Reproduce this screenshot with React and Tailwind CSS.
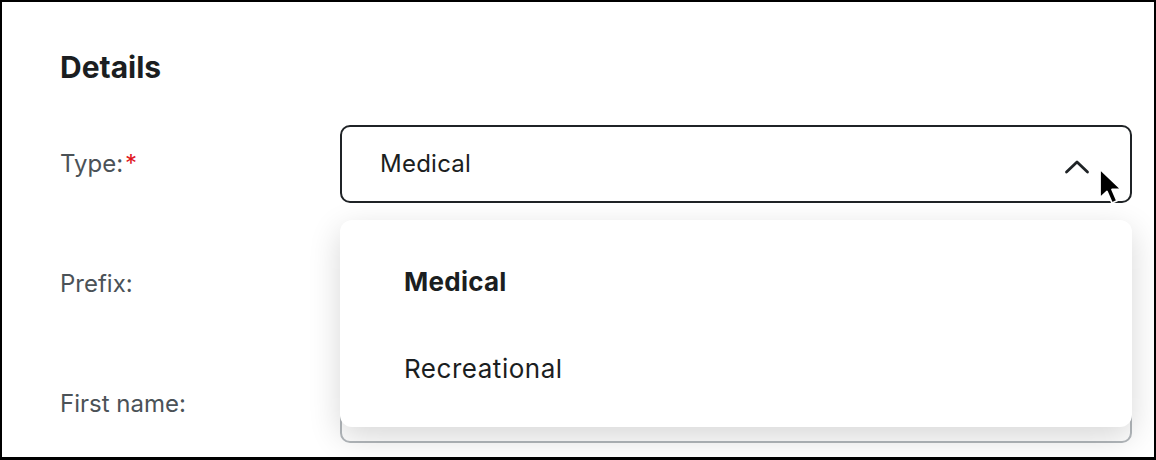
import React from 'react';

const font = { fontFamily: 'Inter, "Noto Sans", sans-serif' };

const ChevronUp = () => (
    <svg width="26" height="16" viewBox="0 0 26 16" fill="none" className="shrink-0 mt-[6px]">
        <path d="M2.5 13 L13 3 L23.5 13" stroke="#1f2326" strokeWidth="2.8" strokeLinecap="round" strokeLinejoin="round" />
    </svg>
);

const Cursor = () => (
    <svg width="30" height="40" viewBox="0 0 30 40" className="absolute left-[758px] top-[42px] pointer-events-none">
        <path d="M2 2 L2 31 L9 24.5 L14 36 L19 33.8 L14 22.5 L23.5 22.5 Z" fill="#000" stroke="#fff" strokeWidth="1.8" strokeLinejoin="round" />
    </svg>
);

const Row = ({ label, required, children }) => (
    <div className="flex items-center">
        <div className="w-[280px] text-[24px] text-[#4b5257]">
            {label}
            {required && <span className="text-[#e0141e] ml-0.5">*</span>}
        </div>
        <div className="w-[792px] relative">{children}</div>
    </div>
);

const App = () => {
    return (
        <div style={font} className="w-[1156px] h-[460px] border-2 border-b-[3px] border-black bg-white overflow-hidden">
            <div className="pl-[58px] pt-[47px]">
                <h2 className="text-[30px] font-bold text-[#1b1e21] leading-[36px]">Details</h2>

                <div className="mt-[40px] flex flex-col gap-[42px]">
                    <Row label="Type:" required>
                        <div className="h-[78px] border-2 border-[#1f2326] rounded-[10px] flex items-center justify-between pl-[38px] pr-[40px] bg-white">
                            <span className="text-[24px] text-[#1b1e21] tracking-[0.01em]">Medical</span>
                            <ChevronUp />
                        </div>
                        <Cursor />

                        {/* Dropdown menu */}
                        <div className="absolute left-0 right-0 top-[95px] z-10 bg-white rounded-[12px] shadow-[0_10px_32px_rgba(0,0,0,0.16)] pt-[18px] pb-[15px]">
                            <div className="h-[87px] flex items-center pl-[64px] text-[26px] font-bold text-[#1b1e21] tracking-[0.01em]">Medical</div>
                            <div className="h-[87px] flex items-center pl-[64px] text-[26px] text-[#1b1e21] tracking-[0.02em]">Recreational</div>
                        </div>
                    </Row>

                    <Row label="Prefix:">
                        <div className="h-[78px] border-2 border-[#b3b8bc] rounded-[10px] bg-white" />
                    </Row>

                    <Row label="First name:">
                        <div className="h-[78px] border-2 border-[#b3b8bc] rounded-[10px] bg-white" />
                    </Row>
                </div>
            </div>
        </div>
    );
};

export default App;
